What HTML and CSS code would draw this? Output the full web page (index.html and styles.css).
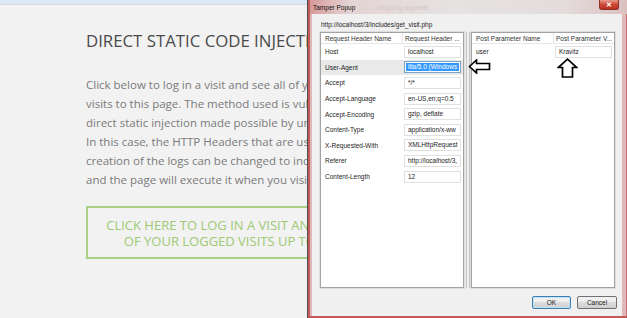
FILE: index.html
```html
<!DOCTYPE html>
<html lang="en">
<head>
    <meta charset="UTF-8">
    <title>Direct Static Code Injection</title>
    <link rel="stylesheet" href="styles.css">
</head>
<body>
    <div class="browser-bar"></div>

    <main class="content">
        <h1>DIRECT STATIC CODE INJECTION</h1>
        <p class="intro">
            Click below to log in a visit and see all of your logged<br>
            visits to this page. The method used is vulnerable to a<br>
            direct static injection made possible by unvalidated input.<br>
            In this case, the HTTP Headers that are used in the<br>
            creation of the logs can be changed to include code<br>
            and the page will execute it when you visit the page.
        </p>
        <a href="#" class="log-btn">Click here to log in a visit and see all<br>of your logged visits up to now</a>
    </main>

    <div class="popup">
        <div class="popup-title">
            <span class="title-text">Tamper Popup</span>
            <span class="title-ghost">Ongoing requests</span>
            <span class="close-btn">&#x2715;</span>
        </div>
        <div class="popup-body">
            <div class="popup-url">http://localhost/3/includes/get_visit.php</div>
            <div class="panels">
                <div class="panel">
                    <div class="row head">
                        <span class="col-name">Request Header Name</span>
                        <span class="col-value">Request Header ...</span>
                    </div>
                    <div class="row"><span class="col-name">Host</span><span class="col-value"><span class="field">localhost</span></span></div>
                    <div class="row selected"><span class="col-name">User-Agent</span><span class="col-value"><span class="field active"><span class="sel">illa/5.0 (Windows</span></span></span></div>
                    <div class="row"><span class="col-name">Accept</span><span class="col-value"><span class="field">*/*</span></span></div>
                    <div class="row"><span class="col-name">Accept-Language</span><span class="col-value"><span class="field">en-US,en;q=0.5</span></span></div>
                    <div class="row"><span class="col-name">Accept-Encoding</span><span class="col-value"><span class="field">gzip, deflate</span></span></div>
                    <div class="row"><span class="col-name">Content-Type</span><span class="col-value"><span class="field">application/x-ww</span></span></div>
                    <div class="row"><span class="col-name">X-Requested-With</span><span class="col-value"><span class="field">XMLHttpRequest</span></span></div>
                    <div class="row"><span class="col-name">Referer</span><span class="col-value"><span class="field">http://localhost/3,</span></span></div>
                    <div class="row"><span class="col-name">Content-Length</span><span class="col-value"><span class="field">12</span></span></div>
                </div>
                <div class="splitter"></div>
                <div class="panel">
                    <div class="row head">
                        <span class="col-name">Post Parameter Name</span>
                        <span class="col-value">Post Parameter V...</span>
                    </div>
                    <div class="row"><span class="col-name">user</span><span class="col-value"><span class="field">Kravitz</span></span></div>
                </div>
            </div>
            <div class="popup-footer">
                <button class="win-btn default">OK</button>
                <button class="win-btn">Cancel</button>
            </div>
        </div>
    </div>

    <!-- setas de anotacao por cima da janela -->
    <svg class="arrow arrow-left" width="23" height="15" viewBox="0 0 23 15">
        <path d="M1.5 7.5 L8.5 1 L8.5 4.5 L21.5 4.5 L21.5 10.5 L8.5 10.5 L8.5 14 Z" fill="#fff" stroke="#000" stroke-width="1.7" stroke-linejoin="miter"/>
    </svg>
    <svg class="arrow arrow-up" width="21" height="20" viewBox="0 0 21 20">
        <path d="M10.5 1.2 L19.8 9.5 L15.5 9.5 L15.5 19 L5.5 19 L5.5 9.5 L1.2 9.5 Z" fill="#fff" stroke="#000" stroke-width="1.7" stroke-linejoin="miter"/>
    </svg>
</body>
</html>
```

FILE: styles.css
```css
* {
    margin: 0;
    padding: 0;
    box-sizing: border-box;
}

body {
    position: relative;
    width: 627px;
    height: 318px;
    overflow: hidden;
    background: #f2f2f2;
    font-family: "Open Sans", sans-serif;
}

.browser-bar {
    height: 5px;
    background: #dce8f6;
    border-bottom: 1px solid #d3dbe4;
}

/* a parte da pagina que fica visivel ao lado da janela */
.content {
    width: 307px;
    overflow: hidden;
    padding: 26px 0 0 86px;
}

.content h1 {
    font-size: 16.8px;
    font-weight: 400;
    line-height: 20px;
    color: #4a4a4a;
    white-space: nowrap;
}

.intro {
    margin-top: 24px;
    font-size: 11.5px;
    line-height: 19px;
    color: #7a7a7a;
    white-space: nowrap;
}

.log-btn {
    display: block;
    width: 303px;
    margin-top: 17px;
    padding: 9px 0 8px;
    border: 2px solid #a9d183;
    font-size: 13px;
    line-height: 16px;
    text-align: center;
    text-transform: uppercase;
    text-decoration: none;
    color: #9dc972;
    white-space: nowrap;
}

/* janela Tamper Popup */
.popup {
    position: absolute;
    left: 307px;
    top: 0;
    width: 320px;
    height: 318px;
    display: flex;
    flex-direction: column;
    padding: 0 5px 2px 4px;
    border-left: 1px solid #4e4e4e;
    background: #dfb9b9;
    box-shadow: inset 2px 0 #c45b5b, inset 0 -2px #c45b5b, inset -1px 0 #c87070;
    font-family: "Liberation Sans", Arial, sans-serif;
    font-size: 6.5px;
    color: #1c1c1c;
}

.popup-title {
    height: 14px;
    display: flex;
    align-items: center;
    margin: 0 -5px 0 -2px;
    padding-left: 3px;
    background: linear-gradient(to right, #d79a9a, #e4d3d3 12%, #e6e2e2 45%, #e4dcdc 80%, #dcc0c0);
}

.title-text {
    color: #111;
}

.title-ghost {
    margin-left: 22px;
    color: #d2c6c6;
}

.close-btn {
    align-self: flex-start;
    margin-left: auto;
    margin-right: 8px;
    width: 20px;
    height: 10px;
    display: flex;
    align-items: center;
    justify-content: center;
    border: 1px solid #8a3026;
    border-top: none;
    border-radius: 0 0 3px 3px;
    background: linear-gradient(#e79a8c, #cc4a38 50%, #b9321f);
    color: #fff;
    font-size: 7px;
    font-weight: 700;
}

.popup-body {
    flex: 1;
    display: flex;
    flex-direction: column;
    padding: 7px 7px 7px 8px;
    background: #f0f0f0;
}

.popup-url {
    line-height: 8px;
    padding-left: 1px;
}

.panels {
    flex: 1;
    display: flex;
    margin-top: 3px;
}

.panel {
    width: 144px;
    background: #fff;
    border: 1px solid #a3a3a3;
    box-shadow: 0 0 0 1px #dedede;
}

.splitter {
    width: 7px;
    background: linear-gradient(to right, transparent 2px, #c4c4c4 2px 3px, transparent 3px 5px, #c4c4c4 5px 6px, transparent 6px);
}

.row {
    height: 15.6px;
    display: flex;
    align-items: center;
    white-space: nowrap;
}

.row.head {
    height: 11px;
    border-bottom: 1px solid #e6e6e6;
    color: #333;
}

.col-name {
    width: 82px;
    padding-left: 4px;
}

.row.head .col-name {
    align-self: stretch;
    display: flex;
    align-items: center;
    border-right: 1px solid #e6e6e6;
}

.col-value {
    flex: 1;
    padding-left: 1px;
    overflow: hidden;
}

.row.head .col-value {
    padding-left: 2px;
}

.row.selected {
    background: #e9e9e9;
}

.field {
    display: block;
    width: 57px;
    height: 12px;
    padding-left: 3px;
    line-height: 10px;
    border: 1px solid #e0e0e0;
    background: #fff;
    overflow: hidden;
}

.field.active {
    border-color: #7da2c6;
    padding: 1px;
}

.sel {
    display: block;
    height: 8px;
    line-height: 8px;
    padding-left: 2px;
    background: #3399ff;
    color: #fff;
}

.popup-footer {
    display: flex;
    justify-content: flex-end;
    gap: 6px;
    margin: 8px -2px 0 0;
}

.win-btn {
    width: 40px;
    height: 13px;
    border: 1px solid #707070;
    border-radius: 2px;
    background: linear-gradient(#f3f3f3, #ebebeb 50%, #dddddd 50%, #cfcfcf);
    font-family: "Liberation Sans", Arial, sans-serif;
    font-size: 6.5px;
    color: #1c1c1c;
}

.win-btn.default {
    width: 39px;
    border-color: #3c7fb1;
    box-shadow: inset 0 0 0 1px #bfe2f7;
}

.arrow {
    position: absolute;
    display: block;
}

.arrow-left {
    left: 468px;
    top: 59px;
}

.arrow-up {
    left: 557px;
    top: 58px;
}
```
